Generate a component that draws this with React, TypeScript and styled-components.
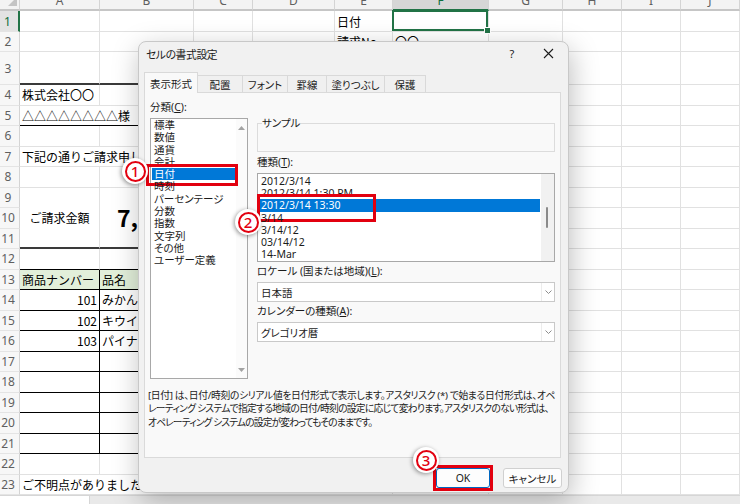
import styled, { createGlobalStyle, css } from 'styled-components';

const GlobalStyle = createGlobalStyle`
  html, body { margin: 0; padding: 0; background: #ffffff; }
  body { width: 740px; height: 504px; overflow: hidden; }
  * { box-sizing: border-box; }
`;

const COL_WIDTHS = [80, 94, 59, 82, 58, 96, 74, 59, 59, 59];
const LETTERS = ['A', 'B', 'C', 'D', 'E', 'F', 'G', 'H', 'I', 'J'];
const ROW_HEIGHTS = [21, 20, 33, ...Array(20).fill(20.5)];
const GRID = '#e1e1e1';
const RED = '#e2000f';
const GREEN = '#217346';
const HEAD_FILL = '#e2efda';

type Edge = 'grid' | 'thin' | 'thick';

interface CellSpec {
  text?: string;
  rowSpan?: number;
  colSpan?: number;
  align?: 'left' | 'center' | 'right';
  big?: boolean;
  fill?: string;
  bottom?: Edge;
  right?: Edge;
  selected?: boolean;
}

const specs = new Map<string, CellSpec>();
const put = (r: number, c: number, s: CellSpec) =>
  specs.set(`${r},${c}`, { ...specs.get(`${r},${c}`), ...s });

put(1, 4, { text: '日付' });
put(1, 5, { selected: true });
put(2, 4, { text: '請求No.' });
put(2, 5, { text: '〇〇' });
for (let c = 0; c < 4; c++) put(3, c, { bottom: 'thick' });
put(4, 0, { text: '株式会社〇〇' });
put(5, 0, { text: '△△△△△△△△様', colSpan: 2, bottom: 'thin' });
put(7, 0, { text: '下記の通りご請求申し上げます。', colSpan: 4 });
put(9, 0, { text: 'ご請求金額', rowSpan: 3, align: 'center', bottom: 'thick' });
put(9, 1, { text: '7,700円', rowSpan: 3, colSpan: 3, big: true, bottom: 'thick' });
for (let c = 0; c < 4; c++) put(12, c, { bottom: 'thin' });
put(13, 0, { text: '商品ナンバー', fill: HEAD_FILL, right: 'thin', bottom: 'thin' });
put(13, 1, { text: '品名', fill: HEAD_FILL, bottom: 'thin' });
put(13, 2, { fill: HEAD_FILL, bottom: 'thin' });
put(13, 3, { fill: HEAD_FILL, bottom: 'thin' });
const ITEMS: [string, string][] = [['101', 'みかん'], ['102', 'キウイ'], ['103', 'パイナップル']];
for (let r = 14; r <= 21; r++) {
  const item = ITEMS[r - 14];
  put(r, 0, { text: item?.[0], align: 'right', right: 'thin', bottom: 'thin' });
  put(r, 1, { text: item?.[1], bottom: 'thin' });
  put(r, 2, { bottom: 'thin' });
  put(r, 3, { bottom: 'thin' });
}
put(23, 0, { text: 'ご不明点がありましたらお気軽にお問い合わせください。', colSpan: 5 });

const CATEGORIES = ['標準', '数値', '通貨', '会計', '日付', '時刻', 'パーセンテージ', '分数', '指数', '文字列', 'その他', 'ユーザー定義'];
const TYPES = ['2012/3/14', '2012/3/14 1:30 PM', '2012/3/14 13:30', '3/14', '3/14/12', '03/14/12', '14-Mar'];
const TABS = [
  { label: '表示形式', w: 54 },
  { label: '配置', w: 45 },
  { label: 'フォント', w: 45 },
  { label: '罫線', w: 39 },
  { label: '塗りつぶし', w: 58 },
  { label: '保護', w: 41 },
];
const DESCRIPTION = [
  { text: '[日付] は、日付/時刻のシリアル値を日付形式で表示します。アスタリスク (*) で始まる日付形式は、オペ', ls: -0.35 },
  { text: 'レーティング システムで指定する地域の日付/時刻の設定に応じて変わります。アスタリスクのない形式は、', ls: -0.75 },
  { text: 'オペレーティング システムの設定が変わってもそのままです。', ls: -0.9 },
];

const edge = (e: Edge) =>
  e === 'thin' ? '1px solid #000' : e === 'thick' ? '2px solid #3a3a3a' : `1px solid ${GRID}`;

function App() {
  const covered = new Set<string>();
  const body: JSX.Element[] = [];
  for (let r = 1; r <= 23; r++) {
    body.push(<RowHead key={`h${r}`} $active={r === 1}>{r}</RowHead>);
    for (let c = 0; c < 10; c++) {
      const key = `${r},${c}`;
      if (covered.has(key)) continue;
      const s = specs.get(key) ?? {};
      const rs = s.rowSpan ?? 1;
      const cs = s.colSpan ?? 1;
      for (let i = 0; i < rs; i++) for (let j = 0; j < cs; j++) covered.add(`${r + i},${c + j}`);
      body.push(
        <Cell
          key={key}
          $rs={rs}
          $cs={cs}
          $align={s.align ?? 'left'}
          $big={s.big}
          $fill={s.fill}
          $bottom={s.bottom ?? 'grid'}
          $right={s.right ?? 'grid'}
          $selected={s.selected}
        >
          {s.text}
        </Cell>
      );
    }
  }

  return (
    <>
      <GlobalStyle />
      <Page>
        <Sheet>
          <Corner>
            <svg width="9" height="9" viewBox="0 0 9 9">
              <path d="M9 0 V9 H0 Z" fill="#c4c4c4" />
            </svg>
          </Corner>
          {LETTERS.map((l, i) => (
            <ColHead key={l} $active={i === 5}>
              <span>{l}</span>
            </ColHead>
          ))}
          {body}
          <SheetTabs>
            <SheetTab />
          </SheetTabs>
        </Sheet>

        <Dialog>
          <TitleBar>
            <Title>セルの書式設定</Title>
            <TitleButtons>
              <TitleButton>?</TitleButton>
              <TitleButton>
                <svg width="11" height="11" viewBox="0 0 11 11">
                  <path d="M1 1 L10 10 M10 1 L1 10" stroke="#1b1b1b" strokeWidth="1.1" />
                </svg>
              </TitleButton>
            </TitleButtons>
          </TitleBar>

          <TabStrip>
            {TABS.map((t, i) => (
              <Tab key={t.label} $w={t.w} $active={i === 0}>
                {t.label}
              </Tab>
            ))}
          </TabStrip>

          <Panel>
            <Columns>
              <LeftCol>
                <FieldLabel $top={0}>
                  分類(<u>C</u>):
                </FieldLabel>
                <ListBox $h={261}>
                  <ListItems $pad={0}>
                    {CATEGORIES.map((c) => (
                      <ListItem key={c} $h={12.3} $selected={c === '日付'} $mark={c === '日付' ? 'left' : undefined}>
                        {c}
                      </ListItem>
                    ))}
                  </ListItems>
                  <ArrowScroll>
                    <svg width="7" height="4" viewBox="0 0 7 4">
                      <path d="M0 4 L3.5 0 L7 4 Z" fill="#a3a3a3" />
                    </svg>
                    <svg width="7" height="4" viewBox="0 0 7 4">
                      <path d="M0 0 L3.5 4 L7 0 Z" fill="#a3a3a3" />
                    </svg>
                  </ArrowScroll>
                </ListBox>
              </LeftCol>

              <RightCol>
                <SampleBox>
                  <legend>サンプル</legend>
                </SampleBox>
                <FieldLabel $top={4}>
                  種類(<u>T</u>):
                </FieldLabel>
                <ListBox $h={89}>
                  <ListItems $pad={1}>
                    {TYPES.map((t) => (
                      <ListItem
                        key={t}
                        $h={12.2}
                        $selected={t === '2012/3/14 13:30'}
                        $mark={t === '2012/3/14 13:30' ? 'right' : undefined}
                      >
                        {t}
                      </ListItem>
                    ))}
                  </ListItems>
                  <ThinScroll>
                    <Thumb />
                  </ThinScroll>
                </ListBox>
                <FieldLabel $top={3}>
                  ロケール (国または地域)(<u>L</u>):
                </FieldLabel>
                <Dropdown>
                  <span>日本語</span>
                  <Chevron>
                    <svg width="7" height="4" viewBox="0 0 7 4">
                      <path d="M0.5 0.5 L3.5 3.5 L6.5 0.5" stroke="#8c8c8c" fill="none" strokeWidth="1" />
                    </svg>
                  </Chevron>
                </Dropdown>
                <FieldLabel $top={3}>
                  カレンダーの種類(<u>A</u>):
                </FieldLabel>
                <Dropdown>
                  <span>グレゴリオ暦</span>
                  <Chevron>
                    <svg width="7" height="4" viewBox="0 0 7 4">
                      <path d="M0.5 0.5 L3.5 3.5 L6.5 0.5" stroke="#8c8c8c" fill="none" strokeWidth="1" />
                    </svg>
                  </Chevron>
                </Dropdown>
              </RightCol>
            </Columns>

            <Description>
              {DESCRIPTION.map((d) => (
                <DescLine key={d.text} $ls={d.ls}>
                  {d.text}
                </DescLine>
              ))}
            </Description>
          </Panel>

          <ButtonRow>
            <Button $w={54} $primary>
              OK
            </Button>
            <Button $w={59}>キャンセル</Button>
          </ButtonRow>
        </Dialog>

        <Marker $x={122} $y={158}>
          <span>1</span>
        </Marker>
        <Marker $x={235} $y={209}>
          <span>2</span>
        </Marker>
        <Marker $x={413} $y={447}>
          <span>3</span>
        </Marker>
      </Page>
    </>
  );
}

//* SHEET
const Page = styled.div`
  position: relative;
  width: 740px;
  height: 504px;
  overflow: hidden;
`;

const Sheet = styled.div`
  display: grid;
  grid-template-columns: 20px ${COL_WIDTHS.map((w) => `${w}px`).join(' ')};
  grid-template-rows: 11px ${ROW_HEIGHTS.map((h) => `${h}px`).join(' ')} 1fr;
  height: 100%;
  font-family: "Noto Sans CJK JP", sans-serif;
  font-size: 12px;
  color: #000;
`;

const Corner = styled.div`
  display: flex;
  justify-content: flex-end;
  align-items: flex-end;
  padding: 0 2px 3px 0;
  background: #f3f3f3;
  border-right: 1px solid #d4d4d4;
  border-bottom: 2px solid #c6c6c6;
`;

const ColHead = styled.div<{ $active?: boolean }>`
  display: flex;
  align-items: flex-end;
  justify-content: center;
  overflow: hidden;
  background: ${(p) => (p.$active ? '#d6d6d6' : '#f3f3f3')};
  color: ${(p) => (p.$active ? '#0e6e3a' : '#5f5f5f')};
  border-right: 1px solid #d4d4d4;
  border-bottom: 2px solid ${(p) => (p.$active ? GREEN : '#c6c6c6')};
  font: 12px/17px "Noto Sans", sans-serif;
`;

const RowHead = styled.div<{ $active?: boolean }>`
  display: flex;
  align-items: center;
  justify-content: center;
  padding-right: 3px;
  background: ${(p) => (p.$active ? '#e3e3e3' : '#f7f7f7')};
  color: ${(p) => (p.$active ? '#0e6e3a' : '#5f5f5f')};
  border-right: ${(p) => (p.$active ? `2px solid ${GREEN}` : '1px solid #d4d4d4')};
  border-bottom: 1px solid #e4e4e4;
  font: 12px "Noto Sans", sans-serif;
`;

const Cell = styled.div<{
  $rs: number;
  $cs: number;
  $align: 'left' | 'center' | 'right';
  $big?: boolean;
  $fill?: string;
  $bottom: Edge;
  $right: Edge;
  $selected?: boolean;
}>`
  grid-row: span ${(p) => p.$rs};
  grid-column: span ${(p) => p.$cs};
  display: flex;
  align-items: center;
  justify-content: ${(p) => (p.$align === 'center' ? 'center' : p.$align === 'right' ? 'flex-end' : 'flex-start')};
  padding: 0 2px;
  white-space: nowrap;
  overflow: hidden;
  background: ${(p) => p.$fill ?? '#fff'};
  border-right: ${(p) => edge(p.$right)};
  border-bottom: ${(p) => edge(p.$bottom)};
  ${(p) =>
    p.$big &&
    css`
      padding-left: 17px;
      font-size: 23px;
      font-weight: 700;
    `}
  ${(p) =>
    p.$selected &&
    css`
      position: relative;
      overflow: visible;
      &::before {
        content: '';
        position: absolute;
        inset: -1px 0 0 -1px;
        border: 2px solid ${GREEN};
      }
      &::after {
        content: '';
        position: absolute;
        right: -3px;
        bottom: -3px;
        width: 5px;
        height: 5px;
        background: ${GREEN};
        border: 1px solid #fff;
      }
    `}
`;

const SheetTabs = styled.div`
  grid-column: 1 / -1;
  display: flex;
  background: #e9e9e9;
  border-top: 1px solid #d6d6d6;
`;

const SheetTab = styled.div`
  width: 90px;
  background: #fff;
  border-right: 1px solid #d6d6d6;
`;

//* DIALOG
const Dialog = styled.div`
  position: absolute;
  left: 138px;
  top: 41px;
  width: 431px;
  height: 452px;
  display: flex;
  flex-direction: column;
  padding: 0 7px 0 5px;
  background: #f1f1f1;
  border: 1px solid #c8c8c8;
  border-radius: 8px;
  box-shadow: 2px 8px 28px rgba(0, 0, 0, 0.26);
  font-family: "Noto Sans", "Noto Sans CJK JP", sans-serif;
  font-feature-settings: "palt";
  font-size: 10.5px;
  color: #1b1b1b;
`;

const TitleBar = styled.div`
  height: 23px;
  display: flex;
  align-items: center;
  justify-content: space-between;
`;

const Title = styled.div`
  padding-left: 2px;
  font-size: 10.8px;
  letter-spacing: -0.4px;
`;

const TitleButtons = styled.div`
  display: flex;
  gap: 10px;
`;

const TitleButton = styled.div`
  width: 26px;
  height: 20px;
  display: flex;
  align-items: center;
  justify-content: center;
  font-size: 11px;
`;

const TabStrip = styled.div`
  height: 27px;
  display: flex;
  align-items: flex-end;
`;

const Tab = styled.div<{ $w: number; $active?: boolean }>`
  width: ${(p) => p.$w}px;
  height: ${(p) => (p.$active ? 21 : 17)}px;
  display: flex;
  align-items: center;
  justify-content: center;
  border: 1px solid #d9d9d9;
  border-left: ${(p) => (p.$active ? '1px solid #d9d9d9' : 'none')};
  border-bottom: none;
  background: ${(p) => (p.$active ? '#f9f9f9' : '#f0f0f0')};
  margin-bottom: ${(p) => (p.$active ? -1 : 0)}px;
  position: relative;
  z-index: ${(p) => (p.$active ? 1 : 0)};
  white-space: nowrap;
`;

const Panel = styled.div`
  height: 366px;
  flex: none;
  display: flex;
  flex-direction: column;
  padding: 8px 5px 0 5px;
  background: #f9f9f9;
  border: 1px solid #dadada;
`;

const Columns = styled.div`
  display: flex;
  gap: 9px;
`;

const LeftCol = styled.div`
  width: 98px;
  display: flex;
  flex-direction: column;
`;

const RightCol = styled.div`
  width: 298px;
  display: flex;
  flex-direction: column;
  padding-top: 16px;
`;

const FieldLabel = styled.div<{ $top: number }>`
  height: 13px;
  line-height: 13px;
  margin: ${(p) => p.$top}px 0 3px;
  white-space: nowrap;
  u {
    text-decoration-thickness: 1px;
    text-underline-offset: 1px;
  }
`;

const SampleBox = styled.fieldset`
  margin: 0;
  height: 35px;
  padding: 0 4px;
  border: 1px solid #dcdcdc;
  legend {
    padding: 0;
    line-height: 12px;
  }
`;

const ListBox = styled.div<{ $h: number }>`
  height: ${(p) => p.$h}px;
  display: flex;
  background: #fff;
  border: 1px solid #a8a8a8;
  margin-top: 1px;
`;

const ListItems = styled.div<{ $pad: number }>`
  flex: 1;
  display: flex;
  flex-direction: column;
  padding: ${(p) => p.$pad}px 1px 0 1px;
`;

const ListItem = styled.div<{ $h: number; $selected?: boolean; $mark?: 'left' | 'right' }>`
  position: relative;
  height: ${(p) => p.$h}px;
  line-height: ${(p) => p.$h}px;
  padding-left: 2px;
  white-space: nowrap;
  ${(p) =>
    p.$selected &&
    css`
      background: #0078d7;
      color: #fff;
    `}
  ${(p) =>
    p.$mark === 'left' &&
    css`
      &::after {
        content: '';
        position: absolute;
        left: -6px;
        right: -3px;
        top: -4px;
        bottom: -6px;
        border: 3px solid ${RED};
      }
    `}
  ${(p) =>
    p.$mark === 'right' &&
    css`
      &::after {
        content: '';
        position: absolute;
        left: -2px;
        top: -5px;
        width: 113px;
        height: 22px;
        border: 3px solid ${RED};
      }
    `}
`;

const ArrowScroll = styled.div`
  width: 11px;
  display: flex;
  flex-direction: column;
  justify-content: space-between;
  align-items: center;
  padding: 7px 0 6px;
  background: #fbfbfb;
`;

const ThinScroll = styled.div`
  width: 13px;
  display: flex;
  flex-direction: column;
  align-items: center;
  background: #f1f1f1;
`;

const Thumb = styled.div`
  width: 2px;
  height: 21px;
  margin-top: 33px;
  margin-left: -2px;
  background: #8a8a8a;
  border-radius: 1px;
`;

const Dropdown = styled.div`
  height: 20px;
  display: flex;
  align-items: center;
  justify-content: space-between;
  padding-left: 3px;
  background: #fff;
  border: 1px solid #c9c9c9;
  margin-top: 1px;
`;

const Chevron = styled.div`
  width: 13px;
  height: 18px;
  display: flex;
  align-items: center;
  justify-content: center;
  border-left: 1px solid #ececec;
`;

const Description = styled.div`
  margin-top: 10px;
  margin-left: -2px;
  font-size: 9.8px;
  line-height: 13.3px;
  white-space: nowrap;
  color: #222;
`;

const DescLine = styled.div<{ $ls: number }>`
  letter-spacing: ${(p) => p.$ls}px;
`;

const ButtonRow = styled.div`
  display: flex;
  justify-content: flex-end;
  gap: 13px;
  margin: 10px -1px 0 0;
`;

const Button = styled.div<{ $w: number; $primary?: boolean }>`
  position: relative;
  width: ${(p) => p.$w}px;
  height: 20px;
  display: flex;
  align-items: center;
  justify-content: center;
  background: #fdfdfd;
  border: 1px solid ${(p) => (p.$primary ? '#0067c0' : '#d0d0d0')};
  border-radius: 3px;
  ${(p) =>
    p.$primary &&
    css`
      &::after {
        content: '';
        position: absolute;
        inset: -4px;
        border: 3px solid ${RED};
      }
    `}
`;

const Marker = styled.div<{ $x: number; $y: number }>`
  position: absolute;
  left: ${(p) => p.$x}px;
  top: ${(p) => p.$y}px;
  width: 26px;
  height: 26px;
  display: flex;
  align-items: center;
  justify-content: center;
  border-radius: 50%;
  background: #fff;
  box-shadow: -1px 1px 4px rgba(0, 0, 0, 0.4);
  span {
    width: 21px;
    height: 21px;
    border-radius: 50%;
    border: 2px solid ${RED};
    color: ${RED};
    font: 500 15px/17px "Noto Sans", sans-serif;
    text-align: center;
  }
`;

export default App;
